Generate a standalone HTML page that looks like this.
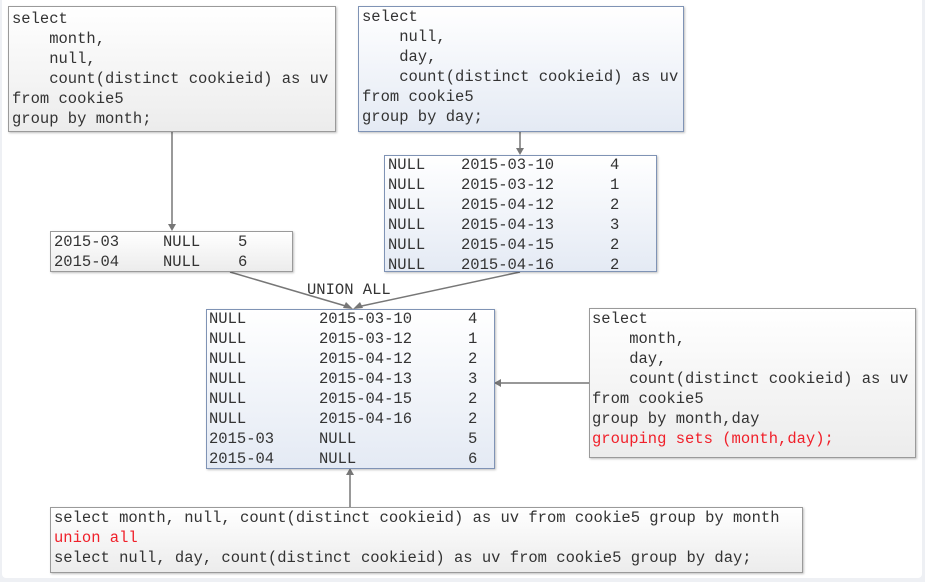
<!DOCTYPE html>
<html><head><meta charset="utf-8"><style>
body{margin:0;width:925px;height:582px;background:#eef0f4;position:relative;overflow:hidden;font-family:"Liberation Mono",monospace;font-size:15.5px;color:#333}
.pg{position:absolute;left:2px;top:0;width:920px;height:578px;background:#fff;border-radius:0 0 4px 4px}
.b{position:absolute;box-sizing:border-box;box-shadow:1px 1px 2px rgba(0,0,0,.25)}
.g{background:linear-gradient(#fff,#ececec);border:1px solid #9a9a9a}
.u{background:linear-gradient(#fff,#e4eaf4);border:1px solid #7f93b5}
.l{position:absolute;white-space:pre;line-height:20px}
.r{color:#f0202a}
svg{position:absolute;left:0;top:0}
</style></head><body><div class="pg"></div>
<svg width="925" height="582"><g stroke="#777" stroke-width="1.5" fill="none">
<line x1="172" y1="131" x2="172" y2="226"/><line x1="520" y1="131" x2="520" y2="150"/>
<line x1="230" y1="272" x2="349" y2="307"/><line x1="520" y1="272" x2="357" y2="307"/>
<line x1="589" y1="383" x2="499" y2="383"/><line x1="350" y1="507" x2="350" y2="473"/></g>
<g fill="#777"><path d="M168 224 L176 224 L172 231Z"/><path d="M516 148 L524 148 L520 155Z"/>
<path d="M353 309 L343 308 L346 302Z"/><path d="M353 309 L360 302 L363 308Z"/>
<path d="M494 383 L501 379 L501 387Z"/><path d="M350 468 L346 475 L354 475Z"/></g></svg>

<div class="b g" style="left:8px;top:6px;width:328px;height:126px">
<div class="l" style="left:3px;top:2px">select
    month,
    null,
    count(distinct cookieid) as uv
from cookie5
group by month;</div></div>

<div class="b u" style="left:358px;top:6px;width:326px;height:126px">
<div class="l" style="left:3px;top:0px">select
    null,
    day,
    count(distinct cookieid) as uv
from cookie5
group by day;</div></div>

<div class="b g" style="left:50px;top:231px;width:243px;height:41px">
<div class="l" style="left:3px;top:0">2015-03</div><div class="l" style="left:112px;top:0">NULL</div><div class="l" style="left:187px;top:0">5</div>
<div class="l" style="left:3px;top:20px">2015-04</div><div class="l" style="left:112px;top:20px">NULL</div><div class="l" style="left:187px;top:20px">6</div>
</div>

<div class="b u" style="left:384px;top:155px;width:273px;height:117px">
<div class="l" style="left:3px;top:-1px">NULL
NULL
NULL
NULL
NULL
NULL</div>
<div class="l" style="left:76px;top:-1px">2015-03-10
2015-03-12
2015-04-12
2015-04-13
2015-04-15
2015-04-16</div>
<div class="l" style="left:225px;top:-1px">4
1
2
3
2
2</div></div>

<div class="l" style="left:307px;top:280px">UNION ALL</div>

<div class="b u" style="left:206px;top:309px;width:289px;height:160px">
<div class="l" style="left:2px;top:-1px">NULL
NULL
NULL
NULL
NULL
NULL
2015-03
2015-04</div>
<div class="l" style="left:112px;top:-1px">2015-03-10
2015-03-12
2015-04-12
2015-04-13
2015-04-15
2015-04-16
NULL
NULL</div>
<div class="l" style="left:261px;top:-1px">4
1
2
3
2
2
5
6</div></div>

<div class="b g" style="left:589px;top:308px;width:327px;height:150px">
<div class="l" style="left:2px;top:0">select
    month,
    day,
    count(distinct cookieid) as uv
from cookie5
group by month,day
<span class="r">grouping sets (month,day);</span></div></div>

<div class="b g" style="left:50px;top:507px;width:753px;height:66px">
<div class="l" style="left:3px;top:0">select month, null, count(distinct cookieid) as uv from cookie5 group by month
<span class="r">union all</span>
select null, day, count(distinct cookieid) as uv from cookie5 group by day;</div></div>
</body></html>
